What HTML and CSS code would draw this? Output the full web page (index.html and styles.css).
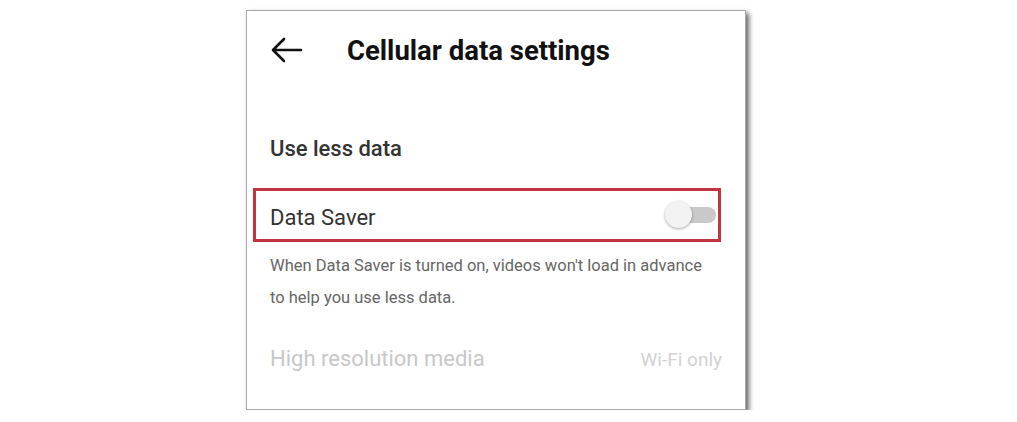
FILE: index.html
```html
<!DOCTYPE html>
<html>
<head>
<meta charset="utf-8">
<link rel="stylesheet" href="styles.css">
</head>
<body>
<div class="stage">
  <div class="card">
    <div class="header">
      <svg class="back" width="32" height="26" viewBox="0 0 32 26">
        <path d="M30 13H3M13 2L2 13l11 11" fill="none" stroke="#111" stroke-width="2.6" stroke-linecap="round" stroke-linejoin="round"/>
      </svg>
      <h1 class="title">Cellular data settings</h1>
    </div>
    <div class="section">Use less data</div>
    <div class="row-box">
      <span class="row-label">Data Saver</span>
      <span class="toggle"><span class="track"></span><span class="knob"></span></span>
    </div>
    <p class="desc">When Data Saver is turned on, videos won't load in advance to help you use less data.</p>
    <div class="row-disabled">
      <span class="dis-label">High resolution media</span>
      <span class="dis-value">Wi-Fi only</span>
    </div>
  </div>
</div>
</body>
</html>
```
FILE: styles.css
```css
html, body {
  margin: 0;
  background: #fff;
}
body {
  font-family: Roboto, "Noto Sans", Arial, sans-serif;
}
.stage {
  padding: 10px 0 0 246px;
}
.card {
  width: 498px;
  height: 398px;
  border: 1px solid #a8a8a8;
  background: #fff;
  box-shadow: 3px 3px 5px rgba(0,0,0,0.6);
  box-sizing: content-box;
}
.header {
  display: flex;
  align-items: center;
  height: 56px;
  margin-top: 11px;
  padding-left: 24px;
}
.back {
  display: block;
  margin-right: 44px;
}
.title {
  margin: 0;
  font-size: 27.5px;
  font-weight: 700;
  color: #111;
}
.section {
  margin-top: 58px;
  padding-left: 23px;
  font-size: 22px;
  font-weight: 500;
  color: #333;
  line-height: 26px;
}
.row-box {
  display: flex;
  align-items: center;
  justify-content: space-between;
  margin: 26px 0 0 6px;
  height: 48px;
  border: 3px solid #c13440;
  padding: 0 2px 0 14px;
  box-sizing: content-box;
  width: 446px;
}
.row-label {
  font-size: 22px;
  color: #333;
  padding-top: 5px;
}
.toggle {
  position: relative;
  width: 52px;
  height: 28px;
  display: block;
}
.track {
  position: absolute;
  left: 6px;
  top: 6px;
  width: 46px;
  height: 16px;
  border-radius: 8px;
  background: #c9c9c9;
}
.knob {
  position: absolute;
  left: 1px;
  top: 0;
  width: 27px;
  height: 27px;
  border-radius: 50%;
  background: #f3f3f3;
  box-shadow: 0 1px 3px rgba(0,0,0,0.35);
}
.desc {
  margin: 8px 0 0 23px;
  width: 445px;
  font-size: 16.5px;
  line-height: 32px;
  color: #666;
}
.row-disabled {
  display: flex;
  justify-content: space-between;
  align-items: baseline;
  margin: 32px 23px 0 23px;
}
.dis-label {
  font-size: 22px;
  color: #c8c8c8;
}
.dis-value {
  font-size: 19px;
  color: #d2d2d2;
}
```
